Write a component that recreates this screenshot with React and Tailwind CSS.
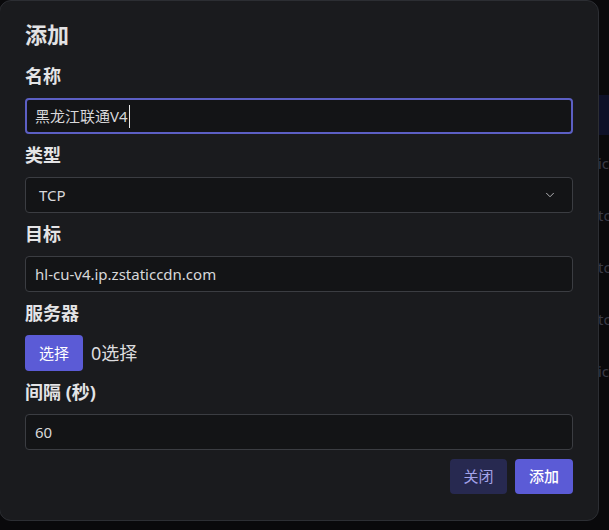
import { ChevronDown } from "lucide-react";

const font = { fontFamily: '"Noto Sans", "Noto Sans CJK SC", sans-serif' };

function Label({ children }) {
  return <div className="h-6 text-[18px] leading-6 font-bold text-[#e4e4e6]">{children}</div>;
}

function Field({ value, focused }) {
  return (
    <div
      className={
        "h-9 flex items-center rounded-[4px] bg-[#131416] text-[15px] text-[#d8d8da] " +
        (focused ? "border-2 border-[#5c5fc4] pl-[8px]" : "border border-[#3b3d42] pl-[9px]")
      }
    >
      <span>{value}</span>
      {focused && <span className="ml-px h-[23px] w-px bg-[#e8e8e8]" />}
    </div>
  );
}

export default function App() {
  const rows = ["icmp", "tcping", "tcping", "tcping", "icmp"];

  return (
    <div className="relative h-[530px] w-[609px] overflow-hidden bg-[#09090b]" style={font}>
      {/* page behind the modal */}
      <div className="flex flex-col pt-[95px]">
        <div className="h-[40px] bg-[#0e1128]" />
        <div className="flex flex-col gap-[28px] pt-[16px] pl-[598px] text-[15px] leading-[24px] text-[#3a3b46]">
          {rows.map((r, i) => (
            <div key={i} className="whitespace-nowrap">{r}</div>
          ))}
        </div>
      </div>

      {/* modal */}
      <div className="absolute left-[-1px] top-0 w-[600px] h-[521px] rounded-[12px] border border-[#2c2e33] bg-[#1a1b1e] pl-[25px] pr-[25px] pt-[19px]">
        <div className="h-7 text-[22px] leading-7 font-bold text-[#e2e2e4]">添加</div>

        <div className="mt-[16px] flex flex-col">
          <Label>名称</Label>
          <div className="mt-[10px]">
            <Field value="黑龙江联通V4" focused />
          </div>

          <div className="mt-[9px]">
            <Label>类型</Label>
          </div>
          <div className="mt-[10px] h-9 flex items-center justify-between rounded-[4px] border border-[#3b3d42] bg-[#131416] pl-[13px] pr-[15px] text-[15px] text-[#d8d8da]">
            <span>TCP</span>
            <ChevronDown size={14} strokeWidth={1.5} className="text-[#c8c8cc]" />
          </div>

          <div className="mt-[9px]">
            <Label>目标</Label>
          </div>
          <div className="mt-[10px]">
            <Field value="hl-cu-v4.ip.zstaticcdn.com" />
          </div>

          <div className="mt-[9px]">
            <Label>服务器</Label>
          </div>
          <div className="mt-[10px] flex items-center gap-[8px]">
            <button className="h-9 w-[58px] rounded-[4px] bg-[#5b5bd6] text-[15px] text-white">选择</button>
            <span className="text-[18px] text-[#dcdcde]">0选择</span>
          </div>

          <div className="mt-[9px]">
            <Label>间隔 (秒)</Label>
          </div>
          <div className="mt-[10px]">
            <Field value="60" />
          </div>

          <div className="mt-[9px] flex justify-end gap-[8px]">
            <button className="h-[35px] w-[57px] rounded-[4px] bg-[#272950] text-[15px] text-[#a3a3ea]">关闭</button>
            <button className="h-[35px] w-[58px] rounded-[4px] bg-[#5b5bd6] text-[15px] font-medium text-white">添加</button>
          </div>
        </div>
      </div>
    </div>
  );
}
